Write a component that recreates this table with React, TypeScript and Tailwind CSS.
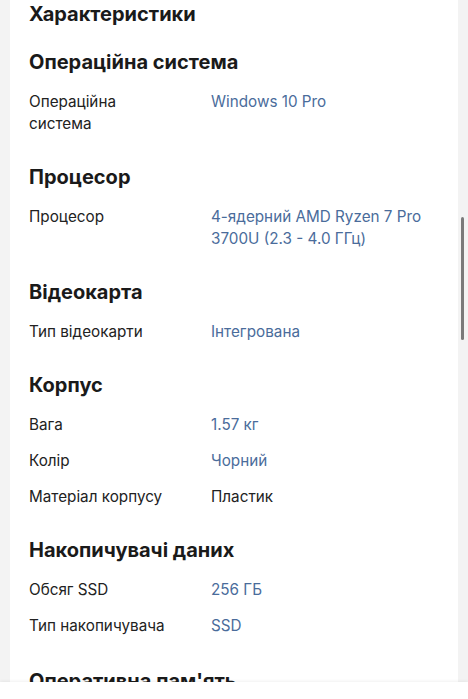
const sections: { title: string; rows: { label: string; value: string; link?: boolean }[] }[] = [
  {
    title: "Операційна система",
    rows: [{ label: "Операційна система", value: "Windows 10 Pro", link: true }],
  },
  {
    title: "Процесор",
    rows: [{ label: "Процесор", value: "4-ядерний AMD Ryzen 7 Pro 3700U (2.3 - 4.0 ГГц)", link: true }],
  },
  {
    title: "Відеокарта",
    rows: [{ label: "Тип відеокарти", value: "Інтегрована", link: true }],
  },
  {
    title: "Корпус",
    rows: [
      { label: "Вага", value: "1.57 кг", link: true },
      { label: "Колір", value: "Чорний", link: true },
      { label: "Матеріал корпусу", value: "Пластик" },
    ],
  },
  {
    title: "Накопичувачі даних",
    rows: [
      { label: "Обсяг SSD", value: "256 ГБ", link: true },
      { label: "Тип накопичувача", value: "SSD", link: true },
    ],
  },
  {
    title: "Оперативна пам'ять",
    rows: [],
  },
];

export default function App() {
  return (
    <div
      className="relative h-[699px] w-[468px] overflow-hidden bg-[#f3f3f3]"
      style={{ fontFamily: "Inter, 'Noto Sans', sans-serif" }}
    >
      <div className="mx-[10px] min-h-full bg-white pl-[19px] pr-[20px]">
        <h2 className="text-[20px] font-bold leading-[28px] text-[#1a1a1a]">Характеристики</h2>

        {sections.map((s, i) => (
          <section key={s.title} className={i === 0 ? "mt-[20px]" : i === sections.length - 1 ? "mt-[30px]" : "mt-[28px]"}>
            <h3 className="text-[20px] font-bold leading-[28px] text-[#1a1a1a]">{s.title}</h3>
            {s.rows.length > 0 && (
              <div className="mt-[15px] flex flex-col gap-[14px]">
                {s.rows.map((r) => (
                  <div key={r.label} className="grid grid-cols-[144px_1fr] gap-x-[38px] text-[15.25px] leading-[22px]">
                    <span className="text-[#222]">{r.label}</span>
                    <span className={r.link ? "text-[#4a6c9b]" : "text-[#222]"}>{r.value}</span>
                  </div>
                ))}
              </div>
            )}
          </section>
        ))}
      </div>

      {/* scrollbar thumb */}
      <div className="absolute right-[4px] top-[217px] h-[123px] w-[3px] rounded-full bg-[#7a7a7a]" />

      {/* bottom bar */}
      <div className="absolute bottom-0 left-0 right-0 h-[17px] bg-white shadow-[0_-1px_3px_rgba(0,0,0,0.06)]" />
    </div>
  );
}
